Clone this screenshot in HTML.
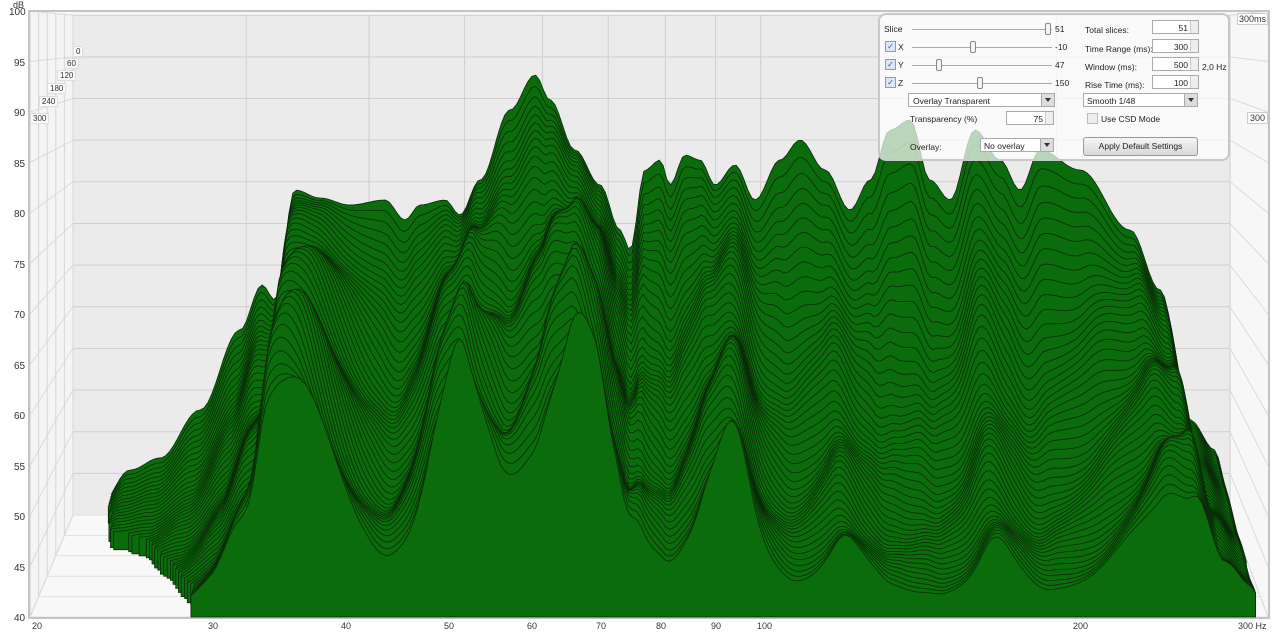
<!DOCTYPE html>
<html><head><meta charset="utf-8"><style>
body{margin:0;width:1280px;height:635px;overflow:hidden;background:#fff;font-family:"Liberation Sans",sans-serif;}
#wrap{position:relative;width:1280px;height:635px;}
svg{position:absolute;left:0;top:0;}
.lbl{position:absolute;font-size:10px;color:#333;}
#panel{position:absolute;left:878px;top:13px;width:348px;height:144px;border:2px solid #c8c8c8;border-radius:8px;background:rgba(255,255,255,0.72);font-size:8.5px;color:#222;}
#panel .t{position:absolute;white-space:nowrap;}
.trk{position:absolute;height:1px;background:#aaa;}
.knob{position:absolute;width:4px;height:10px;border:1px solid #888;border-radius:2px;background:#f4f4f4;}
.cb{position:absolute;width:9px;height:9px;border:1px solid #999;background:#dde6f4;font-size:8px;line-height:9px;text-align:center;color:#35a;}
.box{position:absolute;height:14px;border:1px solid #aaa;background:#fff;font-size:8.5px;line-height:14px;box-sizing:border-box;}
.spin{position:absolute;width:7px;height:12px;border-left:1px solid #ccc;background:#eee;}
.dd{position:absolute;right:0;top:0;width:12px;height:12px;background:#ddd;border-left:1px solid #aaa;}
.dd:after{content:"";position:absolute;left:3px;top:4px;border-left:3px solid transparent;border-right:3px solid transparent;border-top:4px solid #333;}
.btn{position:absolute;border:1px solid #999;border-radius:3px;background:linear-gradient(#f6f6f6,#d8d8d8);text-align:center;font-size:8.5px;line-height:16px;}
</style></head><body><div id="wrap">
<svg id="s" width="1280" height="635" viewBox="0 0 1280 635"></svg>
<div class="lbl" style="left:13px;top:0px;font-size:9px">dB</div>
<div id="ylab"></div>
<div id="xlab"></div>
<div id="panel">
 <div class="t" style="left:4px;top:9px">Slice</div>
 <div class="trk" style="left:32px;top:14px;width:140px"></div><div class="knob" style="left:165px;top:8px"></div>
 <div class="t" style="left:175px;top:9px">51</div>
 <div class="cb" style="left:5px;top:26px">✓</div><div class="t" style="left:18px;top:27px">X</div>
 <div class="trk" style="left:32px;top:32px;width:140px"></div><div class="knob" style="left:90px;top:26px"></div>
 <div class="t" style="left:175px;top:27px">-10</div>
 <div class="cb" style="left:5px;top:44px">✓</div><div class="t" style="left:18px;top:45px">Y</div>
 <div class="trk" style="left:32px;top:50px;width:140px"></div><div class="knob" style="left:56px;top:44px"></div>
 <div class="t" style="left:175px;top:45px">47</div>
 <div class="cb" style="left:5px;top:62px">✓</div><div class="t" style="left:18px;top:63px">Z</div>
 <div class="trk" style="left:32px;top:68px;width:140px"></div><div class="knob" style="left:97px;top:62px"></div>
 <div class="t" style="left:175px;top:63px">150</div>
 <div class="box" style="left:28px;top:78px;width:147px;padding-left:4px">Overlay Transparent<div class="dd"></div></div>
 <div class="t" style="left:30px;top:99px">Transparency (%)</div>
 <div class="box" style="left:126px;top:96px;width:48px;text-align:right;padding-right:10px">75<div class="spin" style="right:0;top:0"></div></div>
 <div class="t" style="left:30px;top:127px">Overlay:</div>
 <div class="box" style="left:100px;top:123px;width:74px;padding-left:3px">No overlay<div class="dd"></div></div>
 <div class="t" style="left:205px;top:10px">Total slices:</div>
 <div class="box" style="left:272px;top:5px;width:47px;text-align:right;padding-right:10px">51<div class="spin" style="right:0;top:0"></div></div>
 <div class="t" style="left:205px;top:29px">Time Range (ms):</div>
 <div class="box" style="left:272px;top:24px;width:47px;text-align:right;padding-right:10px">300<div class="spin" style="right:0;top:0"></div></div>
 <div class="t" style="left:205px;top:47px">Window (ms):</div>
 <div class="box" style="left:272px;top:42px;width:47px;text-align:right;padding-right:10px">500<div class="spin" style="right:0;top:0"></div></div>
 <div class="t" style="left:322px;top:47px">2,0 Hz</div>
 <div class="t" style="left:205px;top:65px">Rise Time (ms):</div>
 <div class="box" style="left:272px;top:60px;width:47px;text-align:right;padding-right:10px">100<div class="spin" style="right:0;top:0"></div></div>
 <div class="box" style="left:203px;top:78px;width:115px;padding-left:3px">Smooth 1/48<div class="dd"></div></div>
 <div class="cb" style="left:207px;top:98px;background:#eee;border-color:#bbb"></div>
 <div class="t" style="left:221px;top:99px">Use CSD Mode</div>
 <div class="btn" style="left:203px;top:122px;width:113px;height:17px">Apply Default Settings</div>
</div>
<div class="lbl" style="left:1237px;top:13px;font-size:9px;border:1px solid #ccc;background:#fff;padding:0 1px">300ms</div>
<div class="lbl" style="left:1247px;top:112px;font-size:9px;border:1px solid #ccc;background:#fff;padding:0 2px">300</div>
</div>
<script>
var S=document.getElementById('s'),h='';
function L(x1,y1,x2,y2,c,w){h+='<line x1="'+x1+'" y1="'+y1+'" x2="'+x2+'" y2="'+y2+'" stroke="'+c+'" stroke-width="'+(w||1)+'"/>';}
h+='<polygon points="30,12 1268,12 1268,617 30,617" fill="#f7f7f7"/>';
h+='<polygon points="73,15 1230,15 1230,515 73,515" fill="#ebebeb"/>';
h+='<polygon points="30,12 73,15 73,515 30,617" fill="#f4f4f4"/>';
h+='<polygon points="73,515 1230,515 1268,617 30,617" fill="#f8f8f8"/>';
var fr=[20,30,40,50,60,70,80,90,100,200,300];
function u(f){return Math.log(f/20)/Math.log(15);}
fr.forEach(function(f){var a=u(f);L(73+1157*a,15,73+1157*a,515,'#cfcfcf');L(73+1157*a,515,30+1238*a,617,'#dedede');});
for(var d=40;d<=100;d+=5){var yb=515-(d-40)*8.33,yf=617-(d-40)*10.1;L(73,yb,1230,yb,'#cfcfcf');L(30,yf,73,yb,'#dadada');L(1230,yb,1268,yf,'#dadada');}
for(var k=0;k<=5;k++){var t=k/5;var x=73-43*t,y=515+102*t;L(x,15-3*t,x,y,'#d6d6d6');L(x,y,1230+38*t,y,'#e0e0e0');}
h+='<rect x="29" y="11" width="1240" height="607" fill="none" stroke="#c4c4c4" stroke-width="2"/>';
var P=[[73,515],[100,505],[130,470],[160,458],[200,410],[240,330],[262,285],[275,300],[295,190],[320,198],[350,205],[385,200],[405,220],[420,205],[445,200],[460,215],[480,180],[510,110],[535,75],[550,100],[575,150],[600,185],[620,230],[630,250],[645,170],[660,160],[670,185],[685,155],[700,160],[715,185],[735,165],[755,200],[780,160],[800,140],[825,170],[850,210],[870,180],[890,130],[910,120],[930,180],[950,200],[975,130],[1000,160],[1020,190],[1040,150],[1080,170],[1130,230],[1160,290],[1190,420],[1215,450],[1230,515]];
function back(x){if(x<=P[0][0])return 0;for(var i=1;i<P.length;i++){if(x<=P[i][0]){var a=P[i-1],b=P[i],r=(x-a[0])/(b[0]-a[0]);r=(1-Math.cos(Math.PI*r))/2;var y=a[1]+(b[1]-a[1])*r;return (515-y)/8.33;}}return 0;}
var R=[[0.21,0.07,0.051],[0.34,0.04,0.046],[0.444,0.06,0.051],[0.565,0.04,0.04],[0.95,0.08,0.045],[0.78,0.03,0.02],[0.66,0.03,0.025]];
function rate(a){var r=0.058;R.forEach(function(g){r-=g[2]*Math.exp(-Math.pow((a-g[0])/g[1],2));});return Math.max(r,0.006);}
var N=50;
for(var k=0;k<=N;k++){var t=k/N;var fy=515+102*t,sc=8.33+1.77*t;
 var x0=73+(30-73)*t,w=1157+(1238-1157)*t;
 var seg=[];
 function flush(){if(seg.length>2){var a=seg[0].split(',')[0],b=seg[seg.length-1].split(',')[0];
   h+='<polygon points="'+a+','+fy.toFixed(1)+' '+seg.join(' ')+' '+b+','+fy.toFixed(1)+'" fill="#0a6c0a" stroke="#0a2a0a" stroke-width="0.8" stroke-linejoin="round"/>';}seg=[];}
 for(var i=0;i<=300;i++){var a=i/300;var db=back(73+1157*a);
  var wig=1+0.12*Math.sin(a*60+k*0.35)*t;
  var v=db*Math.exp(-k*rate(a))*wig;
  var x=x0+w*a,y=fy-v*sc;
  if(v>2.0){seg.push(x.toFixed(1)+','+y.toFixed(1));}else flush();}
 flush();
}
S.innerHTML=h;
var yl='';for(var d=40;d<=100;d+=5){var y=617-(d-40)*10.1;yl+='<div class="lbl" style="left:'+(d==100?9:14)+'px;top:'+(y-4)+'px">'+d+'</div>';}
document.getElementById('ylab').innerHTML=yl;
var xl='';[[20,32],[30,208],[40,341],[50,444],[60,527],[70,596],[80,656],[90,711],[100,757],[200,1073]].forEach(function(p){xl+='<div class="lbl" style="left:'+p[1]+'px;top:621px;font-size:9px">'+p[0]+'</div>';});
xl+='<div class="lbl" style="left:1238px;top:621px;font-size:9px">300 Hz</div>';
var tl=[['0',73,46],['60',64,58],['120',57,70],['180',47,83],['240',39,96],['300',30,113]];
tl.forEach(function(p){xl+='<div class="lbl" style="left:'+p[1]+'px;top:'+p[2]+'px;font-size:8px;border:1px solid #ddd;background:#fafafa;padding:0 2px">'+p[0]+'</div>';});
document.getElementById('xlab').innerHTML=xl;
</script>
</body></html>
